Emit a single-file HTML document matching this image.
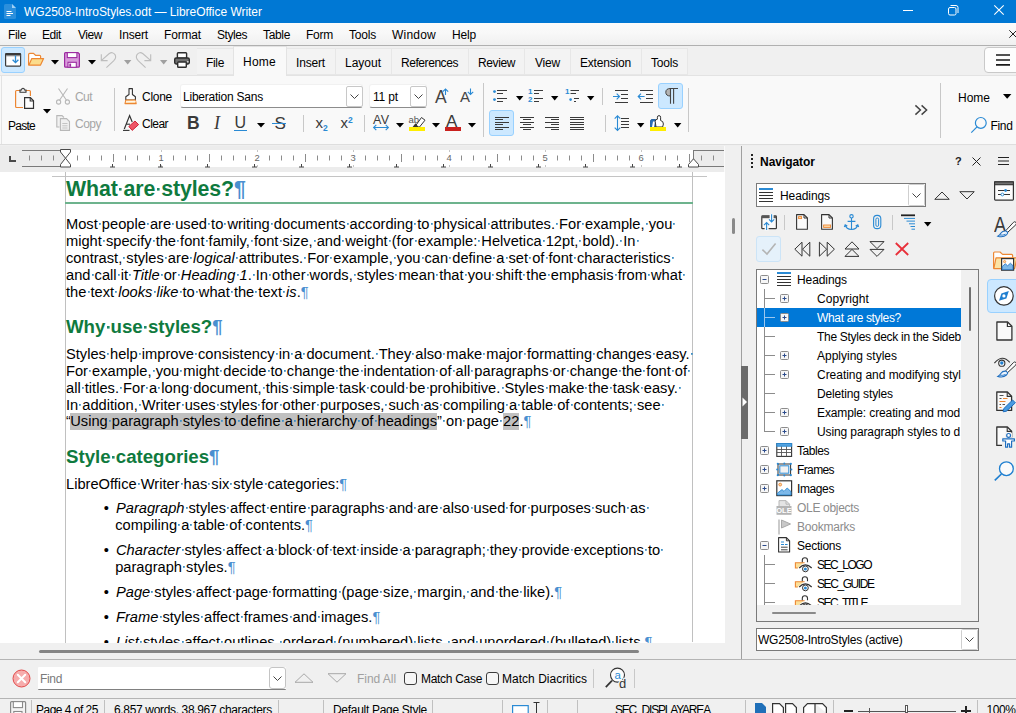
<!DOCTYPE html>
<html lang="en"><head><meta charset="utf-8"><title>WG2508-IntroStyles.odt — LibreOffice Writer</title>
<style>
html,body{margin:0;padding:0}
body{width:1016px;height:713px;overflow:hidden;position:relative;background:#f0f0f0;font-family:'Liberation Sans',sans-serif;font-size:12px;line-height:16px;color:#000}
.a{position:absolute;box-sizing:border-box}
.t{white-space:pre}
.d{white-space:pre;font-size:14.667px;line-height:17px}
.s{background:linear-gradient(#3f8fc4,#3f8fc4) 50% 54%/1.8px 1.8px no-repeat}
.h .s{background:linear-gradient(#1f8a6a,#1f8a6a) 50% 55%/2.6px 2.6px no-repeat}
.p{color:#4a8fd0}
.f{background:#c0c0c0;padding-bottom:1px}
i{font-style:italic}
svg{overflow:visible}
</style></head>
<body>
<div class="a" style="left:0px;top:0px;width:1016px;height:23px;background:#0078d4;"></div>
<svg class="a" style="left:2.5px;top:2.5px;" width="14" height="17" viewBox="0 0 14 17"><path d="M1 2.5 Q1 1 2.5 1 H9 L13 5 V14.5 Q13 16 11.5 16 H2.5 Q1 16 1 14.5 Z" fill="#2b8fdc"/><path d="M9 1 L13 5 H9 Z" fill="#9fd0f5"/><path d="M3.5 8.5 H8.5 M3.5 10.5 H10 M3.5 12.5 H7.5" stroke="#fff" stroke-width="1.1" fill="none"/></svg>
<span class="a t" style="left:24px;top:3.75px;color:#fff;letter-spacing:-0.04px;">WG2508-IntroStyles.odt — LibreOffice Writer</span>
<svg class="a" style="left:903px;top:10px;" width="10" height="1" viewBox="0 0 10 1"><rect width="10" height="1" fill="#fff"/></svg>
<svg class="a" style="left:948px;top:5px;" width="11" height="11" viewBox="0 0 11 11"><rect x="0.5" y="2.5" width="7.5" height="7.5" rx="1.5" fill="none" stroke="#fff"/><path d="M2.5 0.5 H8 Q10 0.5 10 2.5 V8" fill="none" stroke="#fff"/></svg>
<svg class="a" style="left:994px;top:5px;" width="10" height="10" viewBox="0 0 10 10"><path d="M0.3 0.3 L9.7 9.7 M9.7 0.3 L0.3 9.7" stroke="#fff" stroke-width="1.1" fill="none"/></svg>
<div class="a" style="left:0px;top:23px;width:1016px;height:22px;background:linear-gradient(#fbfbfb 0%,#f8f8f8 45%,#f0f0f0 100%);"></div>
<div class="a" style="left:0px;top:45px;width:1016px;height:1px;background:#b0b0b0;"></div>
<span class="a t" style="left:8px;top:26.75px;letter-spacing:-0.34px;">File</span>
<span class="a t" style="left:42px;top:26.75px;letter-spacing:-0.42px;">Edit</span>
<span class="a t" style="left:78px;top:26.75px;letter-spacing:-0.45px;">View</span>
<span class="a t" style="left:119px;top:26.75px;letter-spacing:-0.17px;">Insert</span>
<span class="a t" style="left:164px;top:26.75px;letter-spacing:-0.17px;">Format</span>
<span class="a t" style="left:217px;top:26.75px;letter-spacing:-0.45px;">Styles</span>
<span class="a t" style="left:263px;top:26.75px;letter-spacing:-0.34px;">Table</span>
<span class="a t" style="left:306px;top:26.75px;letter-spacing:-0.25px;">Form</span>
<span class="a t" style="left:349px;top:26.75px;letter-spacing:-0.2px;">Tools</span>
<span class="a t" style="left:392px;top:26.75px;letter-spacing:0.22px;">Window</span>
<span class="a t" style="left:452px;top:26.75px;letter-spacing:-0.17px;">Help</span>
<svg class="a" style="left:1009px;top:30px;" width="8" height="8" viewBox="0 0 8 8"><path d="M0.3 0.3 L7.7 7.7 M7.7 0.3 L0.3 7.7" stroke="#222" stroke-width="1" fill="none"/></svg>
<div class="a" style="left:0px;top:46px;width:1016px;height:30px;background:#f0f0f0;"></div>
<div class="a" style="left:197px;top:48px;width:37px;height:27px;background:#f3f3f3;border:1px solid #e7e7e7;border-left:none;"></div>
<span class="a t" style="left:206px;top:54.75px;letter-spacing:-0.34px;">File</span>
<div class="a" style="left:233px;top:46px;width:54px;height:30px;background:#f9f9f9;border:1px solid #e3e3e3;border-bottom:none;"></div>
<span class="a t" style="left:243px;top:53.75px;letter-spacing:0.25px;">Home</span>
<div class="a" style="left:287px;top:48px;width:49px;height:27px;background:#f3f3f3;border:1px solid #e7e7e7;border-left:none;"></div>
<span class="a t" style="left:296px;top:54.75px;letter-spacing:-0.17px;">Insert</span>
<div class="a" style="left:336px;top:48px;width:56px;height:27px;background:#f3f3f3;border:1px solid #e7e7e7;border-left:none;"></div>
<span class="a t" style="left:345px;top:54.75px;letter-spacing:-0.01px;">Layout</span>
<div class="a" style="left:392px;top:48px;width:77px;height:27px;background:#f3f3f3;border:1px solid #e7e7e7;border-left:none;"></div>
<span class="a t" style="left:401px;top:54.75px;letter-spacing:-0.44px;">References</span>
<div class="a" style="left:469px;top:48px;width:56px;height:27px;background:#f3f3f3;border:1px solid #e7e7e7;border-left:none;"></div>
<span class="a t" style="left:478px;top:54.75px;letter-spacing:-0.39px;">Review</span>
<div class="a" style="left:525px;top:48px;width:46px;height:27px;background:#f3f3f3;border:1px solid #e7e7e7;border-left:none;"></div>
<span class="a t" style="left:535px;top:54.75px;letter-spacing:-0.2px;">View</span>
<div class="a" style="left:571px;top:48px;width:71px;height:27px;background:#f3f3f3;border:1px solid #e7e7e7;border-left:none;"></div>
<span class="a t" style="left:580px;top:54.75px;letter-spacing:-0.19px;">Extension</span>
<div class="a" style="left:642px;top:48px;width:46px;height:27px;background:#f3f3f3;border:1px solid #e7e7e7;border-left:none;"></div>
<span class="a t" style="left:651px;top:54.75px;letter-spacing:-0.2px;">Tools</span>
<div class="a" style="left:984px;top:47px;width:40px;height:26px;background:#fdfdfd;border:1px solid #c9c9c9;border-radius:4px;"></div>
<svg class="a" style="left:996px;top:54px;" width="14" height="12" viewBox="0 0 14 12"><path d="M0 1 H14 M0 6 H14 M0 10.8 H14" stroke="#1a1a1a" stroke-width="1.7" fill="none"/></svg>
<div class="a" style="left:1px;top:47px;width:24px;height:26px;background:#cce8ff;border:1px solid #99d1ff;border-radius:3px;"></div>
<svg class="a" style="left:4px;top:52px" width="18" height="16" viewBox="4 52 18 16"><rect x="5.6" y="53.5" width="15" height="12.6" rx="0.8" fill="#fff" stroke="#3a3a3a" stroke-width="1.2"/><rect x="5.6" y="53.3" width="15" height="1.8" fill="#3a3a3a"/><rect x="6" y="55" width="14.2" height="1.3" fill="#8a8a8a"/><path d="M15.5 55.5 V62.5 M12.6 59.8 L15.5 62.7 L18.4 59.8" stroke="#2a8ad4" stroke-width="1.3" fill="none"/></svg>
<svg class="a" style="left:27px;top:52px" width="18" height="15" viewBox="27 52 18 15"><path d="M28.6 65 V54.5 Q28.6 53.4 29.8 53.4 H33.5 L35.5 55.3 H39.6 Q40.6 55.3 40.6 56.3 V58.5" fill="#fff" stroke="#ed8733" stroke-width="1.2" stroke-linejoin="round"/><path d="M28.8 65.2 L31.8 58.6 H43.6 L40.4 65.2 Z" fill="#fbdc8c" stroke="#ed8733" stroke-width="1.2" stroke-linejoin="round"/></svg>
<svg class="a" style="left:51.3px;top:60.2px" width="8" height="4.5" viewBox="0 0 8 4.5"><path d="M0 0 H8 L4 4.5 Z" fill="#000"/></svg>
<svg class="a" style="left:63px;top:51px" width="18" height="18" viewBox="63 51 18 18"><path d="M64.6 53.5 Q64.6 52.6 65.5 52.6 H78 L79.4 54 V66.3 Q79.4 67.2 78.5 67.2 H65.5 Q64.6 67.2 64.6 66.3 Z" fill="#d99bdb" stroke="#9c2aa0" stroke-width="1.2"/><rect x="67.3" y="52.6" width="9.6" height="5" fill="#fff" stroke="#9c2aa0" stroke-width="1.1"/><rect x="68" y="62.3" width="8.3" height="5" fill="#fff" stroke="#9c2aa0" stroke-width="1.1"/><rect x="69.3" y="63.6" width="1.8" height="3.2" fill="#9c2aa0"/></svg>
<svg class="a" style="left:87.6px;top:60.2px" width="8" height="4.5" viewBox="0 0 8 4.5"><path d="M0 0 H8 L4 4.5 Z" fill="#000"/></svg>
<svg class="a" style="left:100px;top:51px" width="18" height="18" viewBox="100 51 18 18"><path d="M101.3 54.3 V60.6 H107.6 M101.5 60.4 L109 53.8 Q112.6 51.2 115 54.6 Q116.8 57.6 113.6 60.8 L106.4 67.6" fill="none" stroke="#bdbdbd" stroke-width="1.1"/></svg>
<svg class="a" style="left:123.5px;top:60.2px" width="7.4" height="4.5" viewBox="0 0 7.4 4.5"><path d="M0 0 H7.4 L3.7 4.5 Z" fill="#a0a0a0"/></svg>
<svg class="a" style="left:135px;top:51px" width="18" height="18" viewBox="135 51 18 18"><path d="M150.7 54.3 V60.6 H144.4 M150.5 60.4 L143 53.8 Q139.4 51.2 137 54.6 Q135.2 57.6 138.4 60.8 L145.6 67.6" fill="none" stroke="#bdbdbd" stroke-width="1.1"/></svg>
<svg class="a" style="left:159.5px;top:60.2px" width="7.4" height="4.5" viewBox="0 0 7.4 4.5"><path d="M0 0 H7.4 L3.7 4.5 Z" fill="#a0a0a0"/></svg>
<svg class="a" style="left:173px;top:51px" width="18" height="18" viewBox="173 51 18 18"><rect x="177.4" y="52.7" width="9.2" height="5.5" rx="0.8" fill="#fff" stroke="#2d2d2d" stroke-width="1.4"/><rect x="174.7" y="58" width="14.6" height="6" rx="1.4" fill="#707070" stroke="#2d2d2d" stroke-width="1.4"/><rect x="187" y="61.3" width="1.6" height="1" fill="#fff"/><rect x="177.7" y="62" width="8.6" height="5.3" rx="0.8" fill="#fff" stroke="#2d2d2d" stroke-width="1.4"/></svg>
<div class="a" style="left:0px;top:76px;width:1016px;height:68px;background:#f9f9f9;"></div>
<div class="a" style="left:0px;top:75px;width:1016px;height:1px;background:#e3e3e3;"></div>
<div class="a" style="left:234px;top:75px;width:52px;height:1px;background:#f9f9f9;"></div>
<div class="a" style="left:1px;top:76px;width:1px;height:68px;background:#e3e3e3;"></div>
<div class="a" style="left:0px;top:144px;width:1016px;height:1px;background:#dedede;"></div>
<div class="a" style="left:0px;top:145px;width:1016px;height:1px;background:#efefef;"></div>
<svg class="a" style="left:13px;top:86px" width="24" height="25" viewBox="13 86 24 25"><path d="M20 90.5 H16.6 Q15.6 90.5 15.6 91.5 V106.5 Q15.6 107.5 16.6 107.5 H23" fill="none" stroke="#ed8733" stroke-width="1.2"/><path d="M26 90.5 H29.4 Q30.4 90.5 30.4 91.5 V96" fill="none" stroke="#ed8733" stroke-width="1.2"/><path d="M20 92.3 V90 H21.6 Q21.6 88.2 23 88.2 Q24.4 88.2 24.4 90 H26 V92.3 Z" fill="#fff" stroke="#333" stroke-width="1.1"/><path d="M24.6 97.6 H30.4 L33.5 100.8 V108.4 H24.6 Z" fill="#fff" stroke="#333" stroke-width="1.2"/><path d="M30.2 97.8 V101 H33.4" fill="none" stroke="#333" stroke-width="1.1"/></svg>
<span class="a t" style="left:8px;top:117.75px;letter-spacing:-0.74px;">Paste</span>
<svg class="a" style="left:42.6px;top:109px" width="8" height="4.5" viewBox="0 0 8 4.5"><path d="M0 0 H8 L4 4.5 Z" fill="#000"/></svg>
<svg class="a" style="left:55px;top:87px" width="17" height="19" viewBox="55 87 17 19"><path d="M58.5 88.5 L66.5 100.3 M67.5 88.5 L59.5 100.3" stroke="#b8b8b8" stroke-width="1.1" fill="none"/><circle cx="58.6" cy="102" r="2.1" fill="none" stroke="#b8b8b8" stroke-width="1.1"/><circle cx="67.4" cy="102" r="2.1" fill="none" stroke="#b8b8b8" stroke-width="1.1"/></svg>
<span class="a t" style="left:75px;top:88.75px;color:#a6a6a6;letter-spacing:-0.56px;">Cut</span>
<svg class="a" style="left:55px;top:114px" width="17" height="18" viewBox="55 114 17 18"><path d="M59.5 127 H56.8 V115.6 H62 L64 117.5" fill="#f2f2f2" stroke="#b8b8b8" stroke-width="1.1"/><path d="M60.4 118.6 H66.5 L69.5 121.6 V130.4 H60.4 Z" fill="#f0f0f0" stroke="#b8b8b8" stroke-width="1.1"/><path d="M62.3 123.5 H67.5 M62.3 125.8 H67.5 M62.3 128 H67.5" stroke="#c4c4c4" stroke-width="1"/></svg>
<span class="a t" style="left:75px;top:115.75px;color:#a6a6a6;letter-spacing:-0.5px;">Copy</span>
<div class="a" style="left:114px;top:88px;width:1px;height:43px;background:#c8c8c8;"></div>
<svg class="a" style="left:123px;top:87px" width="16" height="19" viewBox="123 87 16 19"><path d="M129 88.6 H132.4 V94.5 L135.4 96.8 V100 H125.8 V96.8 L129 94.5 Z" fill="#fff" stroke="#333" stroke-width="1.1" stroke-linejoin="round"/><path d="M125.8 100 H135.4 L136.2 103.6 H125 Z" fill="#fbd9a8" stroke="#ed8733" stroke-width="1.1" stroke-linejoin="round"/><path d="M126 101.8 L135.8 101.3" stroke="#fff" stroke-width="0.8"/></svg>
<span class="a t" style="left:142px;top:88.75px;letter-spacing:-0.27px;">Clone</span>
<svg class="a" style="left:122px;top:114px" width="18" height="18" viewBox="122 114 18 18"><path d="M124.3 129 L129.6 115.6 L132.2 122" fill="none" stroke="#333" stroke-width="1.2"/><path d="M126.3 124.2 H130" stroke="#333" stroke-width="1.1"/><path d="M123 130.4 H129.5" stroke="#333" stroke-width="1.1"/><path d="M128.8 126.5 L135 121 L138.6 124.6 L132.2 130.4 Z" fill="#ee5566" stroke="#d02638" stroke-width="1"/></svg>
<span class="a t" style="left:142px;top:115.75px;letter-spacing:-0.54px;">Clear</span>
<div class="a" style="left:180px;top:84px;width:183px;height:24px;background:#fff;border:1px solid #f1f1f1;border-bottom:1px solid #8c8c8c;border-radius:3px;"></div>
<span class="a t" style="left:183px;top:88.75px;letter-spacing:-0.23px;">Liberation Sans</span>
<div class="a" style="left:346px;top:86px;width:17px;height:21px;background:#fff;border:1px solid #c8c8c8;border-radius:2px;"></div>
<svg class="a" style="left:350px;top:94px;" width="9" height="5" viewBox="0 0 9 5"><path d="M0.5 0.5 L4.5 4.5 L8.5 0.5" fill="none" stroke="#444" stroke-width="1"/></svg>
<div class="a" style="left:369px;top:84px;width:58px;height:24px;background:#fff;border:1px solid #f1f1f1;border-bottom:1px solid #8c8c8c;border-radius:3px;"></div>
<span class="a t" style="left:373px;top:88.75px;letter-spacing:-0.16px;">11 pt</span>
<div class="a" style="left:410px;top:86px;width:17px;height:21px;background:#fff;border:1px solid #c8c8c8;border-radius:2px;"></div>
<svg class="a" style="left:414px;top:94px;" width="9" height="5" viewBox="0 0 9 5"><path d="M0.5 0.5 L4.5 4.5 L8.5 0.5" fill="none" stroke="#444" stroke-width="1"/></svg>
<span class="a t" style="left:435px;top:86.5px;font-size:17.5px;line-height:20px;color:#444;">A</span>
<svg class="a" style="left:441px;top:87px" width="10" height="10" viewBox="441 87 10 10"><path d="M445.5 95 V89 M442.8 91.7 L445.5 89 L448.2 91.7" fill="none" stroke="#2a8ad4" stroke-width="1.1"/></svg>
<span class="a t" style="left:460px;top:87.25px;font-size:15px;line-height:20px;color:#444;">A</span>
<svg class="a" style="left:466px;top:87px" width="10" height="10" viewBox="466 87 10 10"><path d="M470.5 88.5 V94.5 M467.8 91.8 L470.5 94.5 L473.2 91.8" fill="none" stroke="#2a8ad4" stroke-width="1.1"/></svg>
<div class="a" style="left:483px;top:83px;width:1px;height:54px;background:#c8c8c8;"></div>
<span class="a t" style="left:187px;top:113.25px;font-size:17.5px;line-height:20px;color:#3a3a3a;font-weight:700;">B</span>
<span class="a t" style="left:214px;top:113.25px;font-size:18px;line-height:20px;color:#3a3a3a;font-style:italic;font-family:'Liberation Serif',serif;">I</span>
<span class="a t" style="left:234.5px;top:112.5px;font-size:16px;line-height:20px;color:#3a3a3a;">U</span>
<div class="a" style="left:234px;top:130px;width:13px;height:1px;background:#2a8ad4;"></div>
<svg class="a" style="left:256.5px;top:123.3px" width="8" height="4.5" viewBox="0 0 8 4.5"><path d="M0 0 H8 L4 4.5 Z" fill="#000"/></svg>
<span class="a t" style="left:274.5px;top:113.5px;font-size:17px;line-height:20px;color:#3a3a3a;letter-spacing:-2.34px;">S</span>
<div class="a" style="left:272px;top:123px;width:14px;height:1px;background:#2a8ad4;"></div>
<div class="a" style="left:303px;top:115px;width:1px;height:17px;background:#c8c8c8;"></div>
<span class="a t" style="left:315.5px;top:112.75px;font-size:15px;line-height:20px;color:#3a3a3a;">x</span>
<span class="a t" style="left:323px;top:123px;font-size:8.5px;line-height:10px;color:#2a8ad4;font-weight:700;">2</span>
<span class="a t" style="left:340.5px;top:112.75px;font-size:15px;line-height:20px;color:#3a3a3a;">x</span>
<span class="a t" style="left:348px;top:114.5px;font-size:8.5px;line-height:10px;color:#2a8ad4;font-weight:700;">2</span>
<div class="a" style="left:364px;top:115px;width:1px;height:17px;background:#c8c8c8;"></div>
<span class="a t" style="left:373px;top:111.75px;font-size:12.5px;color:#3a3a3a;letter-spacing:0.38px;">AV</span>
<svg class="a" style="left:372px;top:123px" width="19" height="9" viewBox="372 123 19 9"><path d="M373.6 127.5 H388.4 M376.3 124.8 L373.6 127.5 L376.3 130.2 M385.7 124.8 L388.4 127.5 L385.7 130.2" fill="none" stroke="#2a8ad4" stroke-width="1.1"/></svg>
<svg class="a" style="left:396px;top:123.3px" width="8" height="4.5" viewBox="0 0 8 4.5"><path d="M0 0 H8 L4 4.5 Z" fill="#000"/></svg>
<span class="a t" style="left:408.5px;top:114px;font-size:9.5px;line-height:12px;color:#555;">ab</span>
<svg class="a" style="left:412px;top:114px" width="15" height="14" viewBox="412 114 15 14"><path d="M416 127 L414.8 126.8 L421.5 117.5 L425 120.2 L419.5 127 Z" fill="#fff" stroke="#333" stroke-width="1"/><path d="M412.6 127 L415.5 123.3 L418.6 127 Z" fill="#333"/></svg>
<div class="a" style="left:409px;top:127px;width:16px;height:4px;background:#ffee00;"></div>
<svg class="a" style="left:432px;top:123.3px" width="8" height="4.5" viewBox="0 0 8 4.5"><path d="M0 0 H8 L4 4.5 Z" fill="#000"/></svg>
<span class="a t" style="left:446px;top:111.5px;font-size:17px;line-height:20px;color:#3a3a3a;">A</span>
<div class="a" style="left:445px;top:127px;width:16px;height:4px;background:#c9211e;"></div>
<svg class="a" style="left:468px;top:123.3px" width="8" height="4.5" viewBox="0 0 8 4.5"><path d="M0 0 H8 L4 4.5 Z" fill="#000"/></svg>
<svg class="a" style="left:492px;top:88px" width="17" height="16" viewBox="492 88 17 16"><path d="M497 90.5 H507 M497 93.5 H503 M497 98.5 H507 M497 101.5 H503 " stroke="#3a3a3a" stroke-width="1.1" fill="none"/><circle cx="494.5" cy="91.6" r="1.4" fill="#2a8ad4"/><circle cx="494.5" cy="99.6" r="1.4" fill="#2a8ad4"/></svg>
<svg class="a" style="left:515.5px;top:96.2px" width="7.4" height="4.5" viewBox="0 0 7.4 4.5"><path d="M0 0 H7.4 L3.7 4.5 Z" fill="#000"/></svg>
<svg class="a" style="left:527px;top:88px" width="18" height="16" viewBox="527 88 18 16"><path d="M534 90.5 H543 M534 93.5 H539 M534 98.5 H543 M534 101.5 H539 " stroke="#3a3a3a" stroke-width="1.1" fill="none"/></svg>
<span class="a t" style="left:528px;top:86.75px;font-size:8px;line-height:10px;color:#2a8ad4;font-weight:700;">1</span>
<span class="a t" style="left:528px;top:95px;font-size:8px;line-height:10px;color:#2a8ad4;font-weight:700;">2</span>
<svg class="a" style="left:551.2px;top:96.2px" width="7.4" height="4.5" viewBox="0 0 7.4 4.5"><path d="M0 0 H7.4 L3.7 4.5 Z" fill="#000"/></svg>
<svg class="a" style="left:564px;top:88px" width="17" height="16" viewBox="564 88 17 16"><path d="M570.5 90.5 H579 M570.5 93.5 H576 M574 98.5 H579 M574 101.5 H576 " stroke="#3a3a3a" stroke-width="1.1" fill="none"/><circle cx="570.6" cy="99.6" r="1.3" fill="#2a8ad4"/></svg>
<span class="a t" style="left:565px;top:86.75px;font-size:8px;line-height:10px;color:#2a8ad4;font-weight:700;">1</span>
<svg class="a" style="left:587.4px;top:96.2px" width="7.4" height="4.5" viewBox="0 0 7.4 4.5"><path d="M0 0 H7.4 L3.7 4.5 Z" fill="#000"/></svg>
<div class="a" style="left:602px;top:88px;width:1px;height:17px;background:#c8c8c8;"></div>
<svg class="a" style="left:612px;top:88px" width="18" height="17" viewBox="612 88 18 17"><path d="M615 90.5 H628 M621 94.5 H628 M621 98.5 H628 M615 102.5 H628 " stroke="#3a3a3a" stroke-width="1.1" fill="none"/><path d="M613 96.5 H619.4 M616.7 93.7 L619.5 96.5 L616.7 99.3" fill="none" stroke="#2a8ad4" stroke-width="1.1"/></svg>
<svg class="a" style="left:637px;top:88px" width="18" height="17" viewBox="637 88 18 17"><path d="M640 90.5 H653 M646 94.5 H653 M646 98.5 H653 M640 102.5 H653 " stroke="#3a3a3a" stroke-width="1.1" fill="none"/><path d="M644.6 96.5 H638.2 M641 93.7 L638.2 96.5 L641 99.3" fill="none" stroke="#2a8ad4" stroke-width="1.1"/></svg>
<div class="a" style="left:658px;top:83px;width:25px;height:26px;background:#cce8ff;border:1px solid #99d1ff;border-radius:3px;"></div>
<svg class="a" style="left:664px;top:87px" width="16" height="18" viewBox="664 87 16 18"><path d="M670.5 88.5 Q665.8 88.5 665.8 92.3 Q665.8 96 670.5 96 Z" fill="#b4b4b4" stroke="#444" stroke-width="1"/><path d="M670 88.5 H678 M670.5 88.5 V103.8 M673.6 88.5 V103.8" fill="none" stroke="#444" stroke-width="1.1"/></svg>
<div class="a" style="left:489px;top:110px;width:25px;height:26px;background:#cce8ff;border:1px solid #99d1ff;border-radius:3px;"></div>
<svg class="a" style="left:494px;top:116px" width="16" height="15" viewBox="494 116 16 15"><path d="M495 117.5 H509 M495 119.5 H503 M495 122.5 H509 M495 124.5 H503 M495 127.5 H509 M495 129.5 H503 " stroke="#3a3a3a" stroke-width="1" fill="none"/></svg>
<svg class="a" style="left:519px;top:116px" width="16" height="15" viewBox="519 116 16 15"><path d="M520 117.5 H534 M523 119.5 H531 M520 122.5 H534 M523 124.5 H531 M520 127.5 H534 M523 129.5 H531 " stroke="#3a3a3a" stroke-width="1" fill="none"/></svg>
<svg class="a" style="left:544px;top:116px" width="16" height="15" viewBox="544 116 16 15"><path d="M545 117.5 H559 M551 119.5 H559 M545 122.5 H559 M551 124.5 H559 M545 127.5 H559 M551 129.5 H559 " stroke="#3a3a3a" stroke-width="1" fill="none"/></svg>
<svg class="a" style="left:569px;top:116px" width="16" height="15" viewBox="569 116 16 15"><path d="M570 117.5 H584 M570 119.5 H584 M570 122.5 H584 M570 124.5 H584 M570 127.5 H584 M570 129.5 H584 " stroke="#3a3a3a" stroke-width="1" fill="none"/></svg>
<div class="a" style="left:605px;top:115px;width:1px;height:17px;background:#c8c8c8;"></div>
<svg class="a" style="left:612px;top:114px" width="19" height="18" viewBox="612 114 19 18"><path d="M621 118.5 H629 M621 121.5 H629 M621 124.5 H629 M621 127.5 H629 " stroke="#3a3a3a" stroke-width="1.1" fill="none"/><path d="M617.5 115.8 V130.4 M614.7 118.6 L617.5 115.8 L620.3 118.6 M614.7 127.6 L617.5 130.4 L620.3 127.6" fill="none" stroke="#2a8ad4" stroke-width="1.1"/></svg>
<svg class="a" style="left:637.4px;top:123.3px" width="7.4" height="4.5" viewBox="0 0 7.4 4.5"><path d="M0 0 H7.4 L3.7 4.5 Z" fill="#000"/></svg>
<svg class="a" style="left:649px;top:114px" width="18" height="14" viewBox="649 114 18 14"><path d="M650.6 127 V121 Q650.6 119.6 652 119.6 H655.5 V127 Z" fill="#2a6fb5" stroke="#1f5fa0" stroke-width="1"/><path d="M652 127 L653 121.5 L655 121.5 L654 127 Z" fill="#fff"/><path d="M656 127 L655.2 121.5 Q655 119.5 657.4 119.2 V117.2 Q657.4 115.6 659 115.6 Q660.6 115.6 660.6 117.2 V120.5 Q663.4 121 663.4 124 L662.6 127 Z" fill="#fff" stroke="#333" stroke-width="1"/></svg>
<div class="a" style="left:650px;top:127px;width:16px;height:4px;background:#ffee00;"></div>
<svg class="a" style="left:673.5px;top:123.3px" width="7.4" height="4.5" viewBox="0 0 7.4 4.5"><path d="M0 0 H7.4 L3.7 4.5 Z" fill="#000"/></svg>
<div class="a" style="left:688px;top:88px;width:1px;height:44px;background:#c8c8c8;"></div>
<svg class="a" style="left:913px;top:103px" width="16" height="14" viewBox="913 103 16 14"><path d="M915.4 105.4 L920.4 110 L915.4 114.6 M921.6 105.4 L926.6 110 L921.6 114.6" fill="none" stroke="#444" stroke-width="1.5"/></svg>
<div class="a" style="left:940px;top:83px;width:1px;height:55px;background:#c8c8c8;"></div>
<span class="a t" style="left:958px;top:89.5px;">Home</span>
<svg class="a" style="left:1002.8px;top:94.1px" width="8.4" height="4.7" viewBox="0 0 8.4 4.7"><path d="M0 0 H8.4 L4.2 4.7 Z" fill="#000"/></svg>
<svg class="a" style="left:970px;top:116px" width="18" height="18" viewBox="970 116 18 18"><circle cx="980.8" cy="122.9" r="5.4" fill="none" stroke="#2a8ad4" stroke-width="1.2"/><path d="M977 126.8 L971.3 132.6" stroke="#2a8ad4" stroke-width="1.2" fill="none"/></svg>
<span class="a t" style="left:990.5px;top:117.75px;letter-spacing:-0.34px;">Find</span>
<div class="a" style="left:0px;top:146px;width:724px;height:26px;background:#ececec;"></div>
<div class="a" style="left:724px;top:146px;width:1px;height:26px;background:#fafafa;"></div>
<div class="a" style="left:65px;top:150px;width:628px;height:17px;background:#ffffff;"></div>
<div class="a" style="left:22px;top:150px;width:43px;height:1px;background:#7a7a7a;"></div>
<div class="a" style="left:22px;top:166px;width:43px;height:1px;background:#7a7a7a;"></div>
<div class="a" style="left:693px;top:150px;width:31px;height:1px;background:#7a7a7a;"></div>
<div class="a" style="left:693px;top:166px;width:31px;height:1px;background:#7a7a7a;"></div>
<div class="a" style="left:693px;top:150px;width:1px;height:10px;background:#7a7a7a;"></div>
<svg class="a" style="left:0px;top:150px;" width="742" height="17" viewBox="0 0 742 17"><path d="M29.5 5.5 V10.5 M41.5 5.5 V10.5 M53.5 5.5 V10.5 M77.5 5.5 V10.5 M89.5 5.5 V10.5 M101.5 5.5 V10.5 M113.5 4 V12 M125.5 5.5 V10.5 M137.5 5.5 V10.5 M149.5 5.5 V10.5 M161.5 0.5 V1.5 M161.5 15.5 V16.5 M173.5 5.5 V10.5 M185.5 5.5 V10.5 M197.5 5.5 V10.5 M209.5 4 V12 M221.5 5.5 V10.5 M233.5 5.5 V10.5 M245.5 5.5 V10.5 M257.5 0.5 V1.5 M257.5 15.5 V16.5 M269.5 5.5 V10.5 M281.5 5.5 V10.5 M293.5 5.5 V10.5 M305.5 4 V12 M317.5 5.5 V10.5 M329.5 5.5 V10.5 M341.5 5.5 V10.5 M353.5 0.5 V1.5 M353.5 15.5 V16.5 M365.5 5.5 V10.5 M377.5 5.5 V10.5 M389.5 5.5 V10.5 M401.5 4 V12 M413.5 5.5 V10.5 M425.5 5.5 V10.5 M437.5 5.5 V10.5 M449.5 0.5 V1.5 M449.5 15.5 V16.5 M461.5 5.5 V10.5 M473.5 5.5 V10.5 M485.5 5.5 V10.5 M497.5 4 V12 M509.5 5.5 V10.5 M521.5 5.5 V10.5 M533.5 5.5 V10.5 M545.5 0.5 V1.5 M545.5 15.5 V16.5 M557.5 5.5 V10.5 M569.5 5.5 V10.5 M581.5 5.5 V10.5 M593.5 4 V12 M605.5 5.5 V10.5 M617.5 5.5 V10.5 M629.5 5.5 V10.5 M641.5 0.5 V1.5 M641.5 15.5 V16.5 M653.5 5.5 V10.5 M665.5 5.5 V10.5 M677.5 5.5 V10.5 M689.5 4 V12 M701.5 5.5 V10.5 M713.5 5.5 V10.5 " stroke="#8c8c8c" stroke-width="1" fill="none"/></svg>
<span class="a t" style="left:158.5px;top:151.75px;font-size:9.4px;line-height:12px;color:#666;letter-spacing:-0.22px;">1</span>
<span class="a t" style="left:254.5px;top:151.75px;font-size:9.4px;line-height:12px;color:#666;letter-spacing:-0.22px;">2</span>
<span class="a t" style="left:350.5px;top:151.75px;font-size:9.4px;line-height:12px;color:#666;letter-spacing:-0.22px;">3</span>
<span class="a t" style="left:446.5px;top:151.75px;font-size:9.4px;line-height:12px;color:#666;letter-spacing:-0.22px;">4</span>
<span class="a t" style="left:542.5px;top:151.75px;font-size:9.4px;line-height:12px;color:#666;letter-spacing:-0.22px;">5</span>
<span class="a t" style="left:638.5px;top:151.75px;font-size:9.4px;line-height:12px;color:#666;letter-spacing:-0.22px;">6</span>
<svg class="a" style="left:0px;top:150px;" width="742" height="18" viewBox="0 0 742 18"><path d="M112.5 14 V17 M110 17 H115 M160.5 14 V17 M158 17 H163 M207.5 14 V17 M205 17 H210 M254.5 14 V17 M252 17 H257 M301.5 14 V17 M299 17 H304 M349.5 14 V17 M347 17 H352 M396.5 14 V17 M394 17 H399 M443.5 14 V17 M441 17 H446 M490.5 14 V17 M488 17 H493 M538.5 14 V17 M536 17 H541 M585.5 14 V17 M583 17 H588 M632.5 14 V17 M630 17 H635 M679.5 14 V17 M677 17 H682 " stroke="#444" stroke-width="1" fill="none"/></svg>
<svg class="a" style="left:9px;top:156px;" width="7" height="6" viewBox="0 0 7 6"><path d="M1 0 V5 H7" stroke="#4a4a4a" stroke-width="2" fill="none"/></svg>
<svg class="a" style="left:60px;top:149px;" width="12" height="19" viewBox="0 0 12 19"><path d="M0.5 0.5 H10.5 V3 L5.5 9.2 L10.5 15.5 V18 H0.5 V15.5 L5.5 9.2 L0.5 3 Z" fill="#fff" stroke="#4a4a4a" stroke-width="1"/></svg>
<svg class="a" style="left:688px;top:158px;" width="12" height="10" viewBox="0 0 12 10"><path d="M5.5 0.8 L10.5 6.5 V9 H0.5 V6.5 Z" fill="#fff" stroke="#4a4a4a" stroke-width="1"/></svg>
<div class="a" style="left:0px;top:172px;width:725px;height:471px;background:#fff;"></div>
<div class="a" style="left:725px;top:146px;width:16px;height:514px;background:#f0f0f0;"></div>
<div class="a" style="left:741px;top:146px;width:1px;height:514px;background:#a0a0a0;"></div>
<div class="a" style="left:732px;top:218px;width:3px;height:16px;background:#8a8a8a;border-radius:1.5px;"></div>
<div class="a" style="left:0px;top:643px;width:741px;height:17px;background:#f0f0f0;"></div>
<div class="a" style="left:38.5px;top:649.5px;width:600px;height:3px;background:#858585;border-radius:1.5px;"></div>
<div class="a" style="left:0;top:172px;width:725px;height:471px;overflow:hidden"><div class="a" style="left:52px;top:4px;width:655px;height:1px;background:#c4c4c4"></div><div class="a" style="left:65px;top:0;width:1px;height:471px;background:#c0c0c0"></div><div class="a" style="left:692px;top:0;width:1px;height:470px;background:#c0c0c0"></div><div class="a d h" style="left:66px;top:4.5px;font-size:21.333px;line-height:24px;color:#0f7a3e;font-weight:700;letter-spacing:-0.1px;">What<span class="s"> </span>are<span class="s"> </span>styles?<span class="p">¶</span></div><div class="a" style="left:65px;top:30px;width:628px;height:2px;background:#6db38d"></div><div class="a d" style="left:66px;top:43.5px;">Most<span class="s"> </span>people<span class="s"> </span>are<span class="s"> </span>used<span class="s"> </span>to<span class="s"> </span>writing<span class="s"> </span>documents<span class="s"> </span>according<span class="s"> </span>to<span class="s"> </span>physical<span class="s"> </span>attributes.<span class="s"> </span>For<span class="s"> </span>example,<span class="s"> </span>you<span class="s"> </span></div><div class="a d" style="left:66px;top:60.5px;">might<span class="s"> </span>specify<span class="s"> </span>the<span class="s"> </span>font<span class="s"> </span>family,<span class="s"> </span>font<span class="s"> </span>size,<span class="s"> </span>and<span class="s"> </span>weight<span class="s"> </span>(for<span class="s"> </span>example:<span class="s"> </span>Helvetica<span class="s"> </span>12pt,<span class="s"> </span>bold).<span class="s"> </span>In<span class="s"> </span></div><div class="a d" style="left:66px;top:77.5px;">contrast,<span class="s"> </span>styles<span class="s"> </span>are<span class="s"> </span><i>logical</i><span class="s"> </span>attributes.<span class="s"> </span>For<span class="s"> </span>example,<span class="s"> </span>you<span class="s"> </span>can<span class="s"> </span>define<span class="s"> </span>a<span class="s"> </span>set<span class="s"> </span>of<span class="s"> </span>font<span class="s"> </span>characteristics<span class="s"> </span></div><div class="a d" style="left:66px;top:94.5px;">and<span class="s"> </span>call<span class="s"> </span>it<span class="s"> </span><i>Title</i><span class="s"> </span>or<span class="s"> </span><i>Heading<span class="s"> </span>1</i>.<span class="s"> </span>In<span class="s"> </span>other<span class="s"> </span>words,<span class="s"> </span>styles<span class="s"> </span>mean<span class="s"> </span>that<span class="s"> </span>you<span class="s"> </span>shift<span class="s"> </span>the<span class="s"> </span>emphasis<span class="s"> </span>from<span class="s"> </span>what<span class="s"> </span></div><div class="a d" style="left:66px;top:111.5px;">the<span class="s"> </span>text<span class="s"> </span><i>looks<span class="s"> </span>like</i><span class="s"> </span>to<span class="s"> </span>what<span class="s"> </span>the<span class="s"> </span>text<span class="s"> </span><i>is</i>.<span class="p">¶</span></div><div class="a d h" style="left:66px;top:143.5px;font-size:18.667px;line-height:22px;color:#0f7a3e;font-weight:700;">Why<span class="s"> </span>use<span class="s"> </span>styles?<span class="p">¶</span></div><div class="a d" style="left:66px;top:173.5px;">Styles<span class="s"> </span>help<span class="s"> </span>improve<span class="s"> </span>consistency<span class="s"> </span>in<span class="s"> </span>a<span class="s"> </span>document.<span class="s"> </span>They<span class="s"> </span>also<span class="s"> </span>make<span class="s"> </span>major<span class="s"> </span>formatting<span class="s"> </span>changes<span class="s"> </span>easy.<span class="s"> </span></div><div class="a d" style="left:66px;top:190.5px;">For<span class="s"> </span>example,<span class="s"> </span>you<span class="s"> </span>might<span class="s"> </span>decide<span class="s"> </span>to<span class="s"> </span>change<span class="s"> </span>the<span class="s"> </span>indentation<span class="s"> </span>of<span class="s"> </span>all<span class="s"> </span>paragraphs<span class="s"> </span>or<span class="s"> </span>change<span class="s"> </span>the<span class="s"> </span>font<span class="s"> </span>of<span class="s"> </span></div><div class="a d" style="left:66px;top:207.5px;">all<span class="s"> </span>titles.<span class="s"> </span>For<span class="s"> </span>a<span class="s"> </span>long<span class="s"> </span>document,<span class="s"> </span>this<span class="s"> </span>simple<span class="s"> </span>task<span class="s"> </span>could<span class="s"> </span>be<span class="s"> </span>prohibitive.<span class="s"> </span>Styles<span class="s"> </span>make<span class="s"> </span>the<span class="s"> </span>task<span class="s"> </span>easy.<span class="s"> </span></div><div class="a d" style="left:66px;top:224.5px;">In<span class="s"> </span>addition,<span class="s"> </span>Writer<span class="s"> </span>uses<span class="s"> </span>styles<span class="s"> </span>for<span class="s"> </span>other<span class="s"> </span>purposes,<span class="s"> </span>such<span class="s"> </span>as<span class="s"> </span>compiling<span class="s"> </span>a<span class="s"> </span>table<span class="s"> </span>of<span class="s"> </span>contents;<span class="s"> </span>see<span class="s"> </span></div><div class="a d" style="left:66px;top:240.5px;"><span style="letter-spacing:-0.6px">“</span><span class="f">Using<span class="s"> </span>paragraph<span class="s"> </span>styles<span class="s"> </span>to<span class="s"> </span>define<span class="s"> </span>a<span class="s"> </span>hierarchy<span class="s"> </span>of<span class="s"> </span>headings</span>”<span class="s"> </span>on<span class="s"> </span>page<span class="s"> </span><span class="f">22</span>.<span class="p">¶</span></div><div class="a d h" style="left:66px;top:273.5px;font-size:18.667px;line-height:22px;color:#0f7a3e;font-weight:700;">Style<span class="s"> </span>categories<span class="p">¶</span></div><div class="a d" style="left:66px;top:303.5px;">LibreOffice<span class="s"> </span>Writer<span class="s"> </span>has<span class="s"> </span>six<span class="s"> </span>style<span class="s"> </span>categories:<span class="p">¶</span></div><div class="a d" style="left:103.7px;top:327.5px;">•</div><div class="a d" style="left:116px;top:327.5px;"><i>Paragraph</i><span class="s"> </span>styles<span class="s"> </span>affect<span class="s"> </span>entire<span class="s"> </span>paragraphs<span class="s"> </span>and<span class="s"> </span>are<span class="s"> </span>also<span class="s"> </span>used<span class="s"> </span>for<span class="s"> </span>purposes<span class="s"> </span>such<span class="s"> </span>as<span class="s"> </span></div><div class="a d" style="left:115.2px;top:344.5px;">compiling<span class="s"> </span>a<span class="s"> </span>table<span class="s"> </span>of<span class="s"> </span>contents.<span class="p">¶</span></div><div class="a d" style="left:103.7px;top:369.5px;">•</div><div class="a d" style="left:116px;top:369.5px;"><i>Character</i><span class="s"> </span>styles<span class="s"> </span>affect<span class="s"> </span>a<span class="s"> </span>block<span class="s"> </span>of<span class="s"> </span>text<span class="s"> </span>inside<span class="s"> </span>a<span class="s"> </span>paragraph;<span class="s"> </span>they<span class="s"> </span>provide<span class="s"> </span>exceptions<span class="s"> </span>to<span class="s"> </span></div><div class="a d" style="left:115.2px;top:386.5px;">paragraph<span class="s"> </span>styles.<span class="p">¶</span></div><div class="a d" style="left:103.7px;top:411.5px;">•</div><div class="a d" style="left:116px;top:411.5px;"><i>Page</i><span class="s"> </span>styles<span class="s"> </span>affect<span class="s"> </span>page<span class="s"> </span>formatting<span class="s"> </span>(page<span class="s"> </span>size,<span class="s"> </span>margin,<span class="s"> </span>and<span class="s"> </span>the<span class="s"> </span>like).<span class="p">¶</span></div><div class="a d" style="left:103.7px;top:436.5px;">•</div><div class="a d" style="left:116px;top:436.5px;"><i>Frame</i><span class="s"> </span>styles<span class="s"> </span>affect<span class="s"> </span>frames<span class="s"> </span>and<span class="s"> </span>images.<span class="p">¶</span></div><div class="a d" style="left:103.7px;top:461.5px;">•</div><div class="a d" style="left:116px;top:461.5px;"><i>List</i><span class="s"> </span>styles<span class="s"> </span>affect<span class="s"> </span>outlines,<span class="s"> </span>ordered<span class="s"> </span>(numbered)<span class="s"> </span>lists,<span class="s"> </span>and<span class="s"> </span>unordered<span class="s"> </span>(bulleted)<span class="s"> </span>lists.<span class="p">¶</span></div></div>
<div class="a" style="left:742px;top:146px;width:274px;height:513px;background:#f0f0f0;"></div>
<svg class="a" style="left:751px;top:154px;" width="3" height="14" viewBox="0 0 3 14"><rect x="0" y="0" width="2" height="2" fill="#222"/><rect x="0" y="4" width="2" height="2" fill="#222"/><rect x="0" y="8" width="2" height="2" fill="#222"/><rect x="0" y="12" width="2" height="2" fill="#222"/></svg>
<span class="a t" style="left:760px;top:153.75px;font-weight:700;letter-spacing:-0.04px;">Navigator</span>
<span class="a t" style="left:955px;top:153.25px;font-size:11px;color:#222;font-weight:700;">?</span>
<svg class="a" style="left:972px;top:157px;" width="9" height="9" viewBox="0 0 9 9"><path d="M0.5 0.5 L8.5 8.5 M8.5 0.5 L0.5 8.5" stroke="#222" stroke-width="1" fill="none"/></svg>
<svg class="a" style="left:998px;top:157px;" width="11" height="8" viewBox="0 0 11 8"><path d="M0 0.5 H11 M0 4 H11 M0 7.5 H11" stroke="#222" stroke-width="1" fill="none"/></svg>
<div class="a" style="left:756px;top:183px;width:170px;height:24px;background:#fff;border:1px solid #7a7a7a;"></div>
<svg class="a" style="left:759px;top:188px;" width="14" height="14" viewBox="0 0 14 14"><path d="M0 1 H14" stroke="#2a8ad4" stroke-width="2"/><path d="M0 4.5 H14 M0 7.5 H14 M0 10.5 H14 M0 13.5 H14" stroke="#333" stroke-width="1"/></svg>
<span class="a t" style="left:780px;top:187.75px;letter-spacing:-0.09px;">Headings</span>
<div class="a" style="left:908px;top:184px;width:17px;height:22px;background:#fff;border:1px solid #cfcfcf;border-radius:1.5px;"></div>
<svg class="a" style="left:912px;top:193px;" width="9" height="5" viewBox="0 0 9 5"><path d="M0.5 0.5 L4.5 4.5 L8.5 0.5" fill="none" stroke="#444" stroke-width="1"/></svg>
<svg class="a" style="left:934px;top:190.5px;" width="16" height="9" viewBox="0 0 16 9"><path d="M0.8 8.3 L8 1 L15.2 8.3 Z" fill="none" stroke="#333" stroke-width="1"/></svg>
<svg class="a" style="left:959px;top:191px;" width="16" height="9" viewBox="0 0 16 9"><path d="M0.8 0.7 L8 8 L15.2 0.7 Z" fill="none" stroke="#333" stroke-width="1"/></svg>
<svg class="a" style="left:760px;top:213px" width="18" height="18" viewBox="760 213 18 18"><rect x="761.8" y="215.9" width="14.6" height="12.8" rx="0.8" fill="#fafafa" stroke="#3a3a3a" stroke-width="1.2"/><rect x="762" y="216" width="14.2" height="2.2" fill="#555"/><rect x="769.6" y="214" width="4" height="9" fill="#fafafa"/><rect x="764.6" y="222.5" width="4" height="8" fill="#fafafa"/><path d="M771.6 214.2 V221.8 M769 219.3 L771.6 221.9 L774.2 219.3" fill="none" stroke="#2a8ad4" stroke-width="1.1"/><path d="M766.6 230 V222.6 M764 225.1 L766.6 222.5 L769.2 225.1" fill="none" stroke="#2a8ad4" stroke-width="1.1"/></svg>
<div class="a" style="left:784px;top:215px;width:1px;height:15px;background:#c8c8c8;"></div>
<svg class="a" style="left:796px;top:214px;" width="12" height="16" viewBox="0 0 12 16"><path d="M0.6 0.6 H8 L11.4 4 V15.2 H0.6 Z" fill="#fafafa" stroke="#333" stroke-width="1.1" stroke-linejoin="round"/><path d="M8 0.8 V4 H11.2" fill="none" stroke="#333" stroke-width="1"/><rect x="2.6" y="2.6" width="3" height="2" fill="#fbd9a8" stroke="#ed8733" stroke-width="0.9"/></svg>
<svg class="a" style="left:821px;top:214px;" width="12" height="16" viewBox="0 0 12 16"><path d="M0.6 0.6 H8 L11.4 4 V15.2 H0.6 Z" fill="#fafafa" stroke="#333" stroke-width="1.1" stroke-linejoin="round"/><path d="M8 0.8 V4 H11.2" fill="none" stroke="#333" stroke-width="1"/><rect x="2.6" y="11" width="7" height="2.4" fill="#fbd9a8" stroke="#ed8733" stroke-width="0.9"/></svg>
<svg class="a" style="left:843px;top:213px" width="18" height="18" viewBox="843 213 18 18"><circle cx="851.5" cy="216.3" r="1.7" fill="none" stroke="#2a8ad4" stroke-width="1.1"/><path d="M851.5 218 V229.4 M847.6 221.4 H855.4 M845.2 225 Q846.2 229.2 851.5 229.5 Q856.8 229.2 857.8 225 M844.3 227 L845.2 224.8 L847.3 226 M858.7 227 L857.8 224.8 L855.7 226" fill="none" stroke="#2a8ad4" stroke-width="1.1"/></svg>
<svg class="a" style="left:872px;top:214px" width="11" height="16" viewBox="872 214 11 16"><rect x="873.6" y="215.4" width="7.2" height="13.2" rx="3.4" fill="none" stroke="#2a8ad4" stroke-width="1.1"/><rect x="875.9" y="218" width="2.7" height="8.4" rx="1.3" fill="none" stroke="#2a8ad4" stroke-width="1"/></svg>
<div class="a" style="left:892px;top:215px;width:1px;height:15px;background:#c8c8c8;"></div>
<svg class="a" style="left:900px;top:213px" width="16" height="18" viewBox="900 213 16 18"><path d="M901 215.3 H915" stroke="#222" stroke-width="1.8"/><path d="M904 218.4 H915 M906.5 221.1 H915 M909 223.8 H915 M910.5 226.5 H915 M911.5 229.2 H915" stroke="#2a8ad4" stroke-width="1"/></svg>
<svg class="a" style="left:923.5px;top:222.4px" width="7.4" height="4.4" viewBox="0 0 7.4 4.4"><path d="M0 0 H7.4 L3.7 4.4 Z" fill="#000"/></svg>
<div class="a" style="left:756px;top:236px;width:25px;height:26px;background:#e5f1fb;border:1px solid #cce4f7;border-radius:3px;"></div>
<svg class="a" style="left:761px;top:242px" width="16" height="14" viewBox="761 242 16 14"><path d="M762.4 249.6 L767 254 L775.6 243.6" fill="none" stroke="#b4b4b4" stroke-width="1.6"/></svg>
<svg class="a" style="left:793px;top:240px" width="19" height="18" viewBox="793 240 19 18"><path d="M802 242.2 L794.8 249.2 L802 256.2 Z M809.8 242.2 L802.6 249.2 L809.8 256.2 Z" fill="none" stroke="#333" stroke-width="1" stroke-linejoin="round"/></svg>
<svg class="a" style="left:818px;top:240px" width="19" height="18" viewBox="818 240 19 18"><path d="M819.4 242.2 L826.6 249.2 L819.4 256.2 Z M827.2 242.2 L834.4 249.2 L827.2 256.2 Z" fill="none" stroke="#333" stroke-width="1" stroke-linejoin="round"/></svg>
<svg class="a" style="left:843px;top:240px" width="19" height="18" viewBox="843 240 19 18"><path d="M845 249 L852 241.8 L859 249 Z M845 256.4 L852 249.4 L859 256.4 Z" fill="none" stroke="#333" stroke-width="1" stroke-linejoin="round"/></svg>
<svg class="a" style="left:868px;top:240px" width="19" height="18" viewBox="868 240 19 18"><path d="M870 241.6 L877 248.6 L884 241.6 Z M870 249.4 L877 256.4 L884 249.4 Z" fill="none" stroke="#333" stroke-width="1" stroke-linejoin="round"/></svg>
<svg class="a" style="left:894px;top:241px" width="16" height="16" viewBox="894 241 16 16"><path d="M895.8 243 L908.2 255 M908.2 243 L895.8 255" stroke="#e8303a" stroke-width="1.8" fill="none"/></svg>
<div class="a" style="left:756px;top:269px;width:223px;height:353px;background:#f0f0f0;border:1px solid #7a7a7a;"></div>
<div class="a" style="left:757px;top:270px;width:204px;height:335px;background:#fff;"></div>
<div class="a" style="left:969px;top:287px;width:2px;height:44px;background:#707070;border-radius:1px;"></div>
<div class="a" style="left:772px;top:612px;width:44px;height:2px;background:#8a8a8a;border-radius:1px;"></div>
<div class="a" style="left:757px;top:270px;width:204px;height:335px;overflow:hidden;background:#fff"><svg class="a" style="left:3px;top:5px" width="9" height="9" viewBox="0 0 9 9"><rect x="0.5" y="0.5" width="8" height="8" rx="1" fill="#f6f6f6" stroke="#8c8c8c"/><path d="M2.5 4.5 H6.5" stroke="#2b4b8c" stroke-width="1"/></svg><span class="a t" style="left:40px;top:1.75px;letter-spacing:-0.09px;">Headings</span><svg class="a" style="left:20px;top:1.5px" width="14" height="14" viewBox="0 0 14 14"><path d="M0 1 H14" stroke="#2a8ad4" stroke-width="2"/><path d="M0 4.5 H14 M0 7.5 H14 M0 10.5 H14 M0 13.5 H14" stroke="#333" stroke-width="1"/></svg><div class="a" style="left:7px;top:28px;width:11px;height:1px;background:#8c8c8c"></div><svg class="a" style="left:23px;top:24px" width="9" height="9" viewBox="0 0 9 9"><rect x="0.5" y="0.5" width="8" height="8" rx="1" fill="#f6f6f6" stroke="#8c8c8c"/><path d="M2.5 4.5 H6.5" stroke="#2b4b8c" stroke-width="1"/><path d="M4.5 2.5 V6.5" stroke="#2b4b8c" stroke-width="1"/></svg><span class="a t" style="left:60px;top:20.75px;letter-spacing:0.07px;">Copyright</span><div class="a" style="left:0;top:38px;width:204px;height:19px;background:#0078d7"></div><div class="a" style="left:7px;top:47px;width:11px;height:1px;background:#9cc7ee"></div><svg class="a" style="left:23px;top:43px" width="9" height="9" viewBox="0 0 9 9"><rect x="0.5" y="0.5" width="8" height="8" rx="1" fill="#f6f6f6" stroke="#8c8c8c"/><path d="M2.5 4.5 H6.5" stroke="#2b4b8c" stroke-width="1"/><path d="M4.5 2.5 V6.5" stroke="#2b4b8c" stroke-width="1"/></svg><span class="a t" style="left:60px;top:39.75px;color:#fff;letter-spacing:-0.34px;">What are styles?</span><div class="a" style="left:7px;top:66px;width:11px;height:1px;background:#8c8c8c"></div><span class="a t" style="left:60px;top:58.75px;letter-spacing:-0.29px;">The Styles deck in the Sideb</span><div class="a" style="left:7px;top:85px;width:11px;height:1px;background:#8c8c8c"></div><svg class="a" style="left:23px;top:81px" width="9" height="9" viewBox="0 0 9 9"><rect x="0.5" y="0.5" width="8" height="8" rx="1" fill="#f6f6f6" stroke="#8c8c8c"/><path d="M2.5 4.5 H6.5" stroke="#2b4b8c" stroke-width="1"/><path d="M4.5 2.5 V6.5" stroke="#2b4b8c" stroke-width="1"/></svg><span class="a t" style="left:60px;top:77.75px;">Applying styles</span><div class="a" style="left:7px;top:104px;width:11px;height:1px;background:#8c8c8c"></div><svg class="a" style="left:23px;top:100px" width="9" height="9" viewBox="0 0 9 9"><rect x="0.5" y="0.5" width="8" height="8" rx="1" fill="#f6f6f6" stroke="#8c8c8c"/><path d="M2.5 4.5 H6.5" stroke="#2b4b8c" stroke-width="1"/><path d="M4.5 2.5 V6.5" stroke="#2b4b8c" stroke-width="1"/></svg><span class="a t" style="left:60px;top:96.75px;letter-spacing:-0.03px;">Creating and modifying styl</span><div class="a" style="left:7px;top:123px;width:11px;height:1px;background:#8c8c8c"></div><span class="a t" style="left:60px;top:115.75px;letter-spacing:-0.14px;">Deleting styles</span><div class="a" style="left:7px;top:142px;width:11px;height:1px;background:#8c8c8c"></div><svg class="a" style="left:23px;top:138px" width="9" height="9" viewBox="0 0 9 9"><rect x="0.5" y="0.5" width="8" height="8" rx="1" fill="#f6f6f6" stroke="#8c8c8c"/><path d="M2.5 4.5 H6.5" stroke="#2b4b8c" stroke-width="1"/><path d="M4.5 2.5 V6.5" stroke="#2b4b8c" stroke-width="1"/></svg><span class="a t" style="left:60px;top:134.75px;letter-spacing:-0.12px;">Example: creating and mod</span><div class="a" style="left:7px;top:161px;width:11px;height:1px;background:#8c8c8c"></div><svg class="a" style="left:23px;top:157px" width="9" height="9" viewBox="0 0 9 9"><rect x="0.5" y="0.5" width="8" height="8" rx="1" fill="#f6f6f6" stroke="#8c8c8c"/><path d="M2.5 4.5 H6.5" stroke="#2b4b8c" stroke-width="1"/><path d="M4.5 2.5 V6.5" stroke="#2b4b8c" stroke-width="1"/></svg><span class="a t" style="left:60px;top:153.75px;letter-spacing:-0.11px;">Using paragraph styles to d</span><svg class="a" style="left:3px;top:176px" width="9" height="9" viewBox="0 0 9 9"><rect x="0.5" y="0.5" width="8" height="8" rx="1" fill="#f6f6f6" stroke="#8c8c8c"/><path d="M2.5 4.5 H6.5" stroke="#2b4b8c" stroke-width="1"/><path d="M4.5 2.5 V6.5" stroke="#2b4b8c" stroke-width="1"/></svg><span class="a t" style="left:40px;top:172.75px;letter-spacing:-0.45px;">Tables</span><svg class="a" style="left:19px;top:173px" width="16" height="14" viewBox="0 0 16 14"><rect x="0.8" y="0.6" width="14.8" height="12.8" fill="#fff" stroke="#333" stroke-width="1.1"/><rect x="0.8" y="0.6" width="14.8" height="2.6" fill="#5aa6e0" stroke="#2a8ad4" stroke-width="1"/><path d="M0.8 6.5 H15.6 M0.8 9.5 H15.6 M5.5 3.5 V13.4 M10.5 3.5 V13.4" stroke="#555" stroke-width="0.9"/></svg><svg class="a" style="left:3px;top:195px" width="9" height="9" viewBox="0 0 9 9"><rect x="0.5" y="0.5" width="8" height="8" rx="1" fill="#f6f6f6" stroke="#8c8c8c"/><path d="M2.5 4.5 H6.5" stroke="#2b4b8c" stroke-width="1"/><path d="M4.5 2.5 V6.5" stroke="#2b4b8c" stroke-width="1"/></svg><span class="a t" style="left:40px;top:191.75px;letter-spacing:-0.61px;">Frames</span><svg class="a" style="left:19px;top:192px" width="17" height="15" viewBox="0 0 17 15"><rect x="2" y="2" width="12.6" height="11" fill="#fff" stroke="#333" stroke-width="1"/><rect x="3.8" y="3.8" width="9" height="7.4" fill="#f2f2f2" stroke="#2a8ad4" stroke-width="1"/><g fill="#2a8ad4"><circle cx="1.8" cy="1.8" r="1.1"/><circle cx="14.8" cy="1.8" r="1.1"/><circle cx="1.8" cy="13.2" r="1.1"/><circle cx="14.8" cy="13.2" r="1.1"/><circle cx="8.3" cy="1.4" r="1"/><circle cx="8.3" cy="13.6" r="1"/><circle cx="1.2" cy="7.5" r="1"/><circle cx="15.4" cy="7.5" r="1"/></g></svg><svg class="a" style="left:3px;top:214px" width="9" height="9" viewBox="0 0 9 9"><rect x="0.5" y="0.5" width="8" height="8" rx="1" fill="#f6f6f6" stroke="#8c8c8c"/><path d="M2.5 4.5 H6.5" stroke="#2b4b8c" stroke-width="1"/><path d="M4.5 2.5 V6.5" stroke="#2b4b8c" stroke-width="1"/></svg><span class="a t" style="left:40px;top:210.75px;letter-spacing:-0.39px;">Images</span><svg class="a" style="left:19px;top:209.5px" width="16" height="17" viewBox="0 0 16 17"><rect x="0.8" y="0.8" width="14.8" height="14.8" fill="#fff" stroke="#333" stroke-width="1.2"/><circle cx="4.2" cy="4.6" r="1.4" fill="#fbd9a8" stroke="#ed8733" stroke-width="0.9"/><path d="M1.4 15 V13.2 L6 9.6 L8 11.4 L11.2 8 L15 11.6 V15 Z" fill="#7db8e8" stroke="#2a8ad4" stroke-width="0.9" stroke-linejoin="round"/></svg><span class="a t" style="left:40px;top:229.75px;color:#8c8c8c;letter-spacing:-0.31px;">OLE objects</span><svg class="a" style="left:19px;top:229.5px" width="16" height="16" viewBox="0 0 16 16"><path d="M3 0.6 H10 L13.6 4.2 V7 H3 Z" fill="#e4e4e4" stroke="#b8b8b8" stroke-width="1"/><path d="M10 0.8 V4.2 H13.4" fill="none" stroke="#b8b8b8" stroke-width="1"/><rect x="0.5" y="6" width="15" height="8.8" fill="#b4b4b4"/><text x="8" y="13.4" font-size="7.5" font-weight="700" text-anchor="middle" fill="#fff" font-family="Liberation Sans, sans-serif">OLE</text></svg><span class="a t" style="left:40px;top:248.75px;color:#8c8c8c;letter-spacing:-0.23px;">Bookmarks</span><svg class="a" style="left:21px;top:248.5px" width="14" height="16" viewBox="0 0 14 16"><path d="M1 0.5 V15.5" stroke="#a8a8a8" stroke-width="1.2"/><path d="M3.5 1 L12.5 5 L3.5 9 Z" fill="#c8c8c8" stroke="#a8a8a8" stroke-width="1"/></svg><svg class="a" style="left:3px;top:271px" width="9" height="9" viewBox="0 0 9 9"><rect x="0.5" y="0.5" width="8" height="8" rx="1" fill="#f6f6f6" stroke="#8c8c8c"/><path d="M2.5 4.5 H6.5" stroke="#2b4b8c" stroke-width="1"/></svg><span class="a t" style="left:40px;top:267.75px;letter-spacing:-0.25px;">Sections</span><svg class="a" style="left:21px;top:267px" width="13" height="16" viewBox="0 0 13 16"><path d="M0.6 0.6 H8.4 L11.6 3.8 V15 H0.6 Z" fill="#fff" stroke="#333" stroke-width="1.1" stroke-linejoin="round"/><path d="M8.4 0.8 V3.8 H11.4" fill="none" stroke="#333" stroke-width="1"/><path d="M3 5 H6 M3 7.5 H6 M7 7.5 H9.6" stroke="#2a8ad4" stroke-width="1"/><path d="M3 10.2 H9.6 M3 12.8 H9.6" stroke="#444" stroke-width="1"/></svg><div class="a" style="left:7px;top:294px;width:11px;height:1px;background:#8c8c8c"></div><span class="a t" style="left:60px;top:286.75px;letter-spacing:-1.5px;">SEC_LOGO</span><svg class="a" style="left:37px;top:286.5px" width="19" height="17" viewBox="0 0 19 17"><path d="M1.4 5.8 H9.6 L3.8 11 H1.4 Z" fill="#fbe09a"/><path d="M10.6 5.8 H1.4 V11 H3.8" fill="none" stroke="#ed8733" stroke-width="1.1"/><path d="M8.3 5.3 V3.3 Q8.3 0.7 10.9 0.7 Q13.5 0.7 13.5 3.3 V5.3" fill="none" stroke="#333" stroke-width="1.1"/><path d="M5.2 11 Q11.4 4.6 17.7 11" fill="none" stroke="#333" stroke-width="1.2"/><circle cx="11.4" cy="11.9" r="2.9" fill="#fff" stroke="#333" stroke-width="1"/><circle cx="11.4" cy="11.9" r="1.5" fill="#2a8ad4"/></svg><div class="a" style="left:7px;top:313px;width:11px;height:1px;background:#8c8c8c"></div><span class="a t" style="left:60px;top:305.75px;letter-spacing:-1.43px;">SEC_GUIDE</span><svg class="a" style="left:37px;top:305.5px" width="19" height="17" viewBox="0 0 19 17"><path d="M1.4 5.8 H9.6 L3.8 11 H1.4 Z" fill="#fbe09a"/><path d="M10.6 5.8 H1.4 V11 H3.8" fill="none" stroke="#ed8733" stroke-width="1.1"/><path d="M8.3 5.3 V3.3 Q8.3 0.7 10.9 0.7 Q13.5 0.7 13.5 3.3 V5.3" fill="none" stroke="#333" stroke-width="1.1"/><path d="M5.2 11 Q11.4 4.6 17.7 11" fill="none" stroke="#333" stroke-width="1.2"/><circle cx="11.4" cy="11.9" r="2.9" fill="#fff" stroke="#333" stroke-width="1"/><circle cx="11.4" cy="11.9" r="1.5" fill="#2a8ad4"/></svg><div class="a" style="left:7px;top:332px;width:11px;height:1px;background:#8c8c8c"></div><span class="a t" style="left:60px;top:324.75px;letter-spacing:-1.56px;">SEC_TITLE</span><svg class="a" style="left:37px;top:324.5px" width="19" height="17" viewBox="0 0 19 17"><path d="M1.4 5.8 H9.6 L3.8 11 H1.4 Z" fill="#fbe09a"/><path d="M10.6 5.8 H1.4 V11 H3.8" fill="none" stroke="#ed8733" stroke-width="1.1"/><path d="M8.3 5.3 V3.3 Q8.3 0.7 10.9 0.7 Q13.5 0.7 13.5 3.3 V5.3" fill="none" stroke="#333" stroke-width="1.1"/><path d="M5.2 11 Q11.4 4.6 17.7 11" fill="none" stroke="#333" stroke-width="1.2"/><circle cx="11.4" cy="11.9" r="2.9" fill="#fff" stroke="#333" stroke-width="1"/><circle cx="11.4" cy="11.9" r="1.5" fill="#2a8ad4"/></svg><div class="a" style="left:7px;top:19px;width:1px;height:19px;background:#8c8c8c"></div><div class="a" style="left:7px;top:38px;width:1px;height:19px;background:#9cc7ee"></div><div class="a" style="left:7px;top:57px;width:1px;height:104px;background:#8c8c8c"></div><div class="a" style="left:7px;top:285px;width:1px;height:60px;background:#8c8c8c"></div></div>
<div class="a" style="left:756px;top:628px;width:223px;height:23px;background:#fff;border:1px solid #7a7a7a;"></div>
<span class="a t" style="left:758px;top:631.75px;letter-spacing:-0.23px;">WG2508-IntroStyles (active)</span>
<div class="a" style="left:961px;top:629px;width:17px;height:21px;background:#fff;border:1px solid #cfcfcf;border-radius:1.5px;"></div>
<svg class="a" style="left:965px;top:637px;" width="9" height="5" viewBox="0 0 9 5"><path d="M0.5 0.5 L4.5 4.5 L8.5 0.5" fill="none" stroke="#444" stroke-width="1"/></svg>
<svg class="a" style="left:993px;top:180px" width="23" height="22" viewBox="993 180 23 22"><rect x="994.6" y="181.9" width="18.8" height="18.2" rx="0.8" fill="#fcfcfc" stroke="#333" stroke-width="1.2"/><rect x="994.6" y="181.9" width="18.8" height="2.8" fill="#707070" stroke="#333" stroke-width="1.1"/><path d="M998 190.5 H1010 M998 194.5 H1010" stroke="#333" stroke-width="1"/><circle cx="1005.6" cy="190.5" r="1.4" fill="#2a8ad4"/><circle cx="1002.4" cy="194.5" r="1.4" fill="#fff" stroke="#2a8ad4" stroke-width="0.9"/></svg>
<span class="a t" style="left:994px;top:211.5px;font-size:22px;line-height:26px;color:#3a3a3a;transform:scaleX(.82);transform-origin:0 0;">A</span>
<svg class="a" style="left:996px;top:219px" width="22" height="21" viewBox="996 219 22 21"><path d="M1013.4 222.4 l-7.6 8.2 l1.8 1.8 l8.2 -7.6 q1.2 -1.6 0 -2.6 q-1.2 -1 -2.4 0.2 Z" fill="#fff" stroke="#333" stroke-width="1"/><path d="M1006 231 q-3.4 -0.4 -5 2 q-1.2 2 -3.2 3.2 q5.4 1.6 8.6 -1.4 q1.6 -1.6 1.2 -2.4 Z" fill="#eef5fc" stroke="#1f6fc0" stroke-width="1.1"/><path d="M1000 235 q3 0.6 5.6 -0.8" fill="none" stroke="#1f6fc0" stroke-width="0.9"/></svg>
<svg class="a" style="left:992px;top:250px" width="26" height="22" viewBox="992 250 26 22"><path d="M993.6 268.4 V253 Q993.6 252 994.6 252 H1000 L1002.6 254.4 H1011.6 Q1012.6 254.4 1012.6 255.4 V258" fill="#fff" stroke="#ed8733" stroke-width="1.2" stroke-linejoin="round"/><path d="M993.8 268.6 L996 257.8 H1017 L1014.6 268.6 Z" fill="#fbe3a4" stroke="#ed8733" stroke-width="1.2" stroke-linejoin="round"/><rect x="1001.6" y="258.6" width="12" height="11.6" fill="#fff" stroke="#333" stroke-width="1.2"/><circle cx="1004.6" cy="261.6" r="1.1" fill="#fbd9a8" stroke="#ed8733" stroke-width="0.8"/><path d="M1002.2 269.6 V266.5 L1005.4 263.8 L1007.6 265.8 L1010.4 263.2 L1013 265.6 V269.6 Z" fill="#7db8e8" stroke="#1f6fc0" stroke-width="0.8"/></svg>
<div class="a" style="left:987px;top:279px;width:40px;height:34px;background:#cce8ff;border:1px solid #99d1ff;border-radius:4px;"></div>
<svg class="a" style="left:993px;top:285px" width="23" height="22" viewBox="993 285 23 22"><circle cx="1003.9" cy="295.9" r="9.3" fill="#fff" stroke="#333" stroke-width="1.2"/><path d="M1008.8 291 L1006.4 298.4 L999 300.8 L1001.4 293.4 Z" fill="#1f7fd0"/><circle cx="1003.9" cy="295.9" r="1.6" fill="#fff"/></svg>
<svg class="a" style="left:995px;top:320px" width="19" height="22" viewBox="995 320 19 22"><path d="M996.9 322 H1007.6 L1011.9 326.3 V340 H996.9 Z" fill="#fafafa" stroke="#333" stroke-width="1.3" stroke-linejoin="round"/><path d="M1007.4 322.2 V326.5 H1011.7" fill="none" stroke="#333" stroke-width="1.2"/></svg>
<svg class="a" style="left:993px;top:356px" width="25" height="23" viewBox="993 356 25 23"><path d="M994.4 363.2 Q1002 353.6 1009.8 362.4" fill="none" stroke="#333" stroke-width="1.1"/><circle cx="1001.8" cy="363.2" r="3.1" fill="#fff" stroke="#333" stroke-width="1.1"/><circle cx="1001.8" cy="363" r="1.7" fill="#1f7fd0"/><path d="M1013.4 362.6 l-7.6 8.2 l1.8 1.8 l8.2 -7.6 q1.2 -1.6 0 -2.6 q-1.2 -1 -2.4 0.2 Z" fill="#fff" stroke="#333" stroke-width="1"/><path d="M1006 371.2 q-3.4 -0.4 -5 2 q-1.2 2 -3.2 3.2 q5.4 1.6 8.6 -1.4 q1.6 -1.6 1.2 -2.4 Z" fill="#eef5fc" stroke="#1f6fc0" stroke-width="1.1"/><path d="M1000 375.2 q3 0.6 5.6 -0.8" fill="none" stroke="#1f6fc0" stroke-width="0.9"/></svg>
<svg class="a" style="left:995px;top:390px" width="23" height="23" viewBox="995 390 23 23"><path d="M996.8 392 H1007.4 L1011.6 396.2 V410.4 H996.8 Z" fill="#fafafa" stroke="#333" stroke-width="1.3" stroke-linejoin="round"/><path d="M1007.2 392.2 V396.4 H1011.4" fill="none" stroke="#333" stroke-width="1.1"/><path d="M999.5 395.5 H1003.5 M999.5 398.5 H1001.5 M999.5 404.5 H1001 M1002.5 404.5 H1005" stroke="#555" stroke-width="1"/><path d="M1003 398.5 H1007.5 M999.5 401.5 H1005.5 M999.5 407.5 H1001.5" stroke="#ed8733" stroke-width="1.1"/><path d="M1012.6 400 L1015.4 402.8 L1006.4 411.2 L1003.2 411.8 L1003.8 408.6 Z" fill="#4a9be0" stroke="#1f6fc0" stroke-width="1"/></svg>
<svg class="a" style="left:995px;top:425px" width="23" height="24" viewBox="995 425 23 24"><path d="M996.8 427 H1007.4 L1011.6 431.2 V445.4 H996.8 Z" fill="#fafafa" stroke="#333" stroke-width="1.3" stroke-linejoin="round"/><path d="M1007.2 427.2 V431.4 H1011.4" fill="none" stroke="#333" stroke-width="1.1"/><rect x="1002" y="437.4" width="14" height="10.6" fill="#f0f0f0"/><rect x="1005" y="432.6" width="7" height="5" fill="#f0f0f0"/><circle cx="1008.6" cy="435.4" r="1.9" fill="#fff" stroke="#1f6fc0" stroke-width="1.2"/><path d="M1002.8 438.8 H1014.4 V441 H1011.6 V447.2 H1009.6 V443.8 H1007.6 V447.2 H1005.6 V441 H1002.8 Z" fill="#fff" stroke="#1f6fc0" stroke-width="1.2" stroke-linejoin="round"/></svg>
<svg class="a" style="left:993px;top:460px" width="23" height="23" viewBox="993 460 23 23"><circle cx="1006.4" cy="468.7" r="6.9" fill="#fafafa" stroke="#1f7fd0" stroke-width="1.3"/><path d="M1001.4 474 L994.8 480.4" stroke="#1f7fd0" stroke-width="1.7" fill="none"/></svg>
<div class="a" style="left:741px;top:366px;width:7px;height:73px;background:#6b6b6b;"></div>
<svg class="a" style="left:742px;top:397px;" width="5" height="10" viewBox="0 0 5 10"><path d="M0.5 0.5 L5 5 L0.5 9.5 Z" fill="#fff"/></svg>
<div class="a" style="left:0px;top:659px;width:1016px;height:1px;background:#b4b4b4;"></div>
<div class="a" style="left:0px;top:660px;width:1016px;height:38px;background:#f0f0f0;"></div>
<div class="a" style="left:0px;top:698px;width:1016px;height:1px;background:#b4b4b4;"></div>
<svg class="a" style="left:11.6px;top:668.5px;" width="19" height="19" viewBox="0 0 19 19"><circle cx="9.5" cy="9.5" r="8.5" fill="#f6acac" stroke="#e24a4a" stroke-width="1"/><path d="M5.8 5.8 L13.2 13.2 M13.2 5.8 L5.8 13.2" stroke="#fff" stroke-width="2" fill="none" stroke-linecap="round"/></svg>
<div class="a" style="left:38px;top:667px;width:248px;height:23px;background:#fff;border-bottom:1px solid #808080;border-radius:1px;"></div>
<span class="a t" style="left:40px;top:670.75px;color:#7a7a7a;letter-spacing:-0.34px;">Find</span>
<div class="a" style="left:269px;top:667px;width:17px;height:22px;background:#fff;border:1px solid #c4c4c4;border-radius:3px;"></div>
<svg class="a" style="left:273px;top:676px;" width="9" height="5" viewBox="0 0 9 5"><path d="M0.5 0.5 L4.5 4.5 L8.5 0.5" fill="none" stroke="#444" stroke-width="1"/></svg>
<svg class="a" style="left:294px;top:673px;" width="20" height="10" viewBox="0 0 20 10"><path d="M1 9.3 L10 0.8 L19 9.3 Z" fill="none" stroke="#a8a8a8" stroke-width="1"/></svg>
<svg class="a" style="left:327px;top:673px;" width="20" height="10" viewBox="0 0 20 10"><path d="M1 0.7 L10 9.2 L19 0.7 Z" fill="none" stroke="#a8a8a8" stroke-width="1"/></svg>
<span class="a t" style="left:357px;top:670.75px;color:#a0a0a0;letter-spacing:-0.04px;">Find All</span>
<div class="a" style="left:404px;top:672px;width:13px;height:13px;background:#f6f6f6;border:1px solid #3c3c3c;border-radius:3px;"></div>
<span class="a t" style="left:421px;top:670.75px;letter-spacing:-0.3px;">Match Case</span>
<div class="a" style="left:486px;top:672px;width:13px;height:13px;background:#f6f6f6;border:1px solid #3c3c3c;border-radius:3px;"></div>
<span class="a t" style="left:502px;top:670.75px;letter-spacing:0.02px;">Match Diacritics</span>
<div class="a" style="left:593px;top:669px;width:1px;height:19px;background:#c8c8c8;"></div>
<svg class="a" style="left:603px;top:666px" width="26" height="24" viewBox="603 666 26 24"><circle cx="617.5" cy="675.1" r="7" fill="#fdfdfd" stroke="#333" stroke-width="1.1"/><path d="M612 680.6 L605.8 687.2" stroke="#333" stroke-width="1.7" fill="none"/><text x="617.7" y="678.7" font-size="11.5" text-anchor="middle" fill="#2a8ad4" font-family="Liberation Sans, sans-serif">a</text><text x="622.6" y="687.6" font-size="13" text-anchor="middle" fill="#333" stroke="#f0f0f0" stroke-width="2.4" paint-order="stroke" font-family="Liberation Sans, sans-serif">d</text></svg>
<div class="a" style="left:634px;top:669px;width:1px;height:19px;background:#c8c8c8;"></div>
<div class="a" style="left:0px;top:699px;width:1016px;height:14px;background:#f0f0f0;"></div>
<div class="a" style="left:31px;top:700px;width:1px;height:13px;background:#c0c0c0;"></div>
<div class="a" style="left:104px;top:700px;width:1px;height:13px;background:#c0c0c0;"></div>
<div class="a" style="left:278px;top:700px;width:1px;height:13px;background:#c0c0c0;"></div>
<div class="a" style="left:323px;top:700px;width:1px;height:13px;background:#c0c0c0;"></div>
<div class="a" style="left:432px;top:700px;width:1px;height:13px;background:#c0c0c0;"></div>
<div class="a" style="left:502px;top:700px;width:1px;height:13px;background:#c0c0c0;"></div>
<div class="a" style="left:547px;top:700px;width:1px;height:13px;background:#c0c0c0;"></div>
<div class="a" style="left:577px;top:700px;width:1px;height:13px;background:#c0c0c0;"></div>
<div class="a" style="left:745px;top:700px;width:1px;height:13px;background:#c0c0c0;"></div>
<div class="a" style="left:833px;top:700px;width:1px;height:13px;background:#c0c0c0;"></div>
<div class="a" style="left:977px;top:700px;width:1px;height:13px;background:#c0c0c0;"></div>
<svg class="a" style="left:10px;top:701px;" width="16" height="12" viewBox="0 0 16 12"><rect x="0.6" y="0.6" width="15" height="16" rx="1" fill="#f4f4f4" stroke="#8a8a8a" stroke-width="1.2"/><rect x="3.3" y="0.6" width="9.2" height="6" fill="#fff" stroke="#8a8a8a" stroke-width="1.1"/><rect x="3.8" y="10.5" width="8.2" height="6" fill="#fff" stroke="#8a8a8a" stroke-width="1.1"/></svg>
<span class="a t" style="left:36px;top:702.25px;letter-spacing:-0.51px;">Page 4 of 25</span>
<span class="a t" style="left:114px;top:702.25px;letter-spacing:-0.34px;">6,857 words, 38,967 characters</span>
<span class="a t" style="left:333px;top:702.25px;letter-spacing:-0.3px;">Default Page Style</span>
<span class="a t" style="left:615px;top:702.25px;letter-spacing:-1.2px;">SEC_DISPLAYAREA</span>
<span class="a t" style="left:986.5px;top:702.25px;letter-spacing:-0.43px;">100%</span>
<svg class="a" style="left:512px;top:705px;" width="17" height="8" viewBox="0 0 17 8"><rect x="0.6" y="0.6" width="15.6" height="12" fill="#fff" stroke="#2a8ad4" stroke-width="1.2"/></svg>
<svg class="a" style="left:533px;top:702px;" width="7" height="11" viewBox="0 0 7 11"><path d="M0.5 0.5 H6.5 M3.5 0.5 V11" stroke="#333" stroke-width="1" fill="none"/></svg>
<svg class="a" style="left:755px;top:703px;" width="11" height="10" viewBox="0 0 11 10"><path d="M0 0 H7 L11 4 V10 H0 Z" fill="#1f6fb8"/></svg>
<svg class="a" style="left:772px;top:703px;" width="26" height="10" viewBox="0 0 26 10"><path d="M0.6 10 V0.6 H7.5 L11.4 4.5 V10 M13.6 10 V0.6 H20.5 L24.4 4.5 V10" fill="#fff" stroke="#333" stroke-width="1.2"/></svg>
<svg class="a" style="left:803px;top:703px;" width="25" height="10" viewBox="0 0 25 10"><path d="M0.6 10 V4.5 L4.5 0.6 H12 V10 M12 0.6 H19.5 L23.4 4.5 V10" fill="#fff" stroke="#333" stroke-width="1.2"/></svg>
<div class="a" style="left:844px;top:710px;width:9px;height:2px;background:#222;"></div>
<div class="a" style="left:858px;top:711px;width:98px;height:1px;background:#555;"></div>
<div class="a" style="left:869px;top:708px;width:1px;height:5px;background:#555;"></div>
<div class="a" style="left:905px;top:705px;width:3px;height:8px;background:#fff;border:1px solid #555;"></div>
<div class="a" style="left:961px;top:710px;width:10px;height:2px;background:#222;"></div>
<div class="a" style="left:965px;top:706px;width:2px;height:7px;background:#222;"></div>
</body></html>
